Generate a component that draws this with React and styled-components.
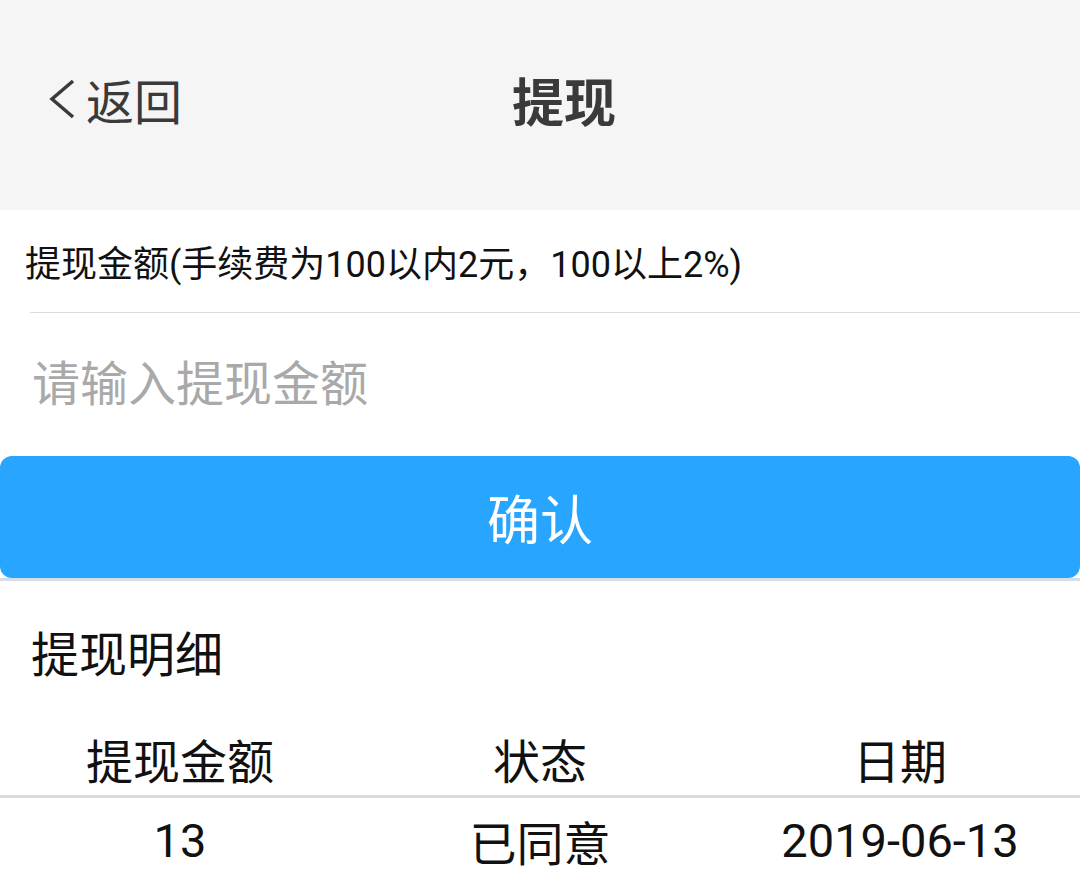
import React from 'react'
import styled, {createGlobalStyle} from 'styled-components'

const GlobalStyle = createGlobalStyle`
  html, body {
    margin: 0;
    padding: 0;
    background: #fff;
    font-family: Roboto, "Noto Sans CJK SC", sans-serif;
    color: #111;
  }
  * { box-sizing: border-box; }
`

const Page = styled.div`
  width: 1080px;
  min-height: 880px;
  background: #fff;
`

const NavBar = styled.div`
  height: 210px;
  background-color: #f5f5f5;
  display: grid;
  grid-template-columns: 1fr auto 1fr;
  align-items: center;
  padding: 0 44px 12px 48px;
`

const Back = styled.div`
  display: flex;
  align-items: center;
  gap: 10px;
  font-size: 48px;
  color: #3a3a3a;
  cursor: pointer;
`

const Title = styled.div`
  font-size: 52px;
  font-weight: bold;
  color: #3a3a3a;
  padding-left: 44px;
`

const LabelRow = styled.div`
  height: 102px;
  display: flex;
  align-items: center;
  padding: 0 0 0 25px;
  font-size: 36px;
  color: #111;
`

const Divider = styled.div`
  height: 1px;
  margin-left: 30px;
  background: #dcdcdc;
`

const AmountInput = styled.input`
  display: block;
  width: 100%;
  height: 143px;
  border: none;
  outline: none;
  padding: 0 0 0 32px;
  font-family: Roboto, "Noto Sans CJK SC", sans-serif;
  font-size: 48px;
  color: #111;
  background: transparent;

  &::placeholder {
    color: #a9a9a9;
  }
`

const Confirm = styled.button`
  display: block;
  width: 100%;
  height: 122px;
  border: none;
  border-radius: 12px;
  background: #28a5ff;
  color: #fff;
  font-family: Roboto, "Noto Sans CJK SC", sans-serif;
  font-size: 53px;
  cursor: pointer;
`

const Shadow = styled.div`
  height: 3px;
  background: #d6dde4;
`

const SectionTitle = styled.div`
  height: 140px;
  display: flex;
  align-items: center;
  padding-left: 31px;
  font-size: 48px;
  color: #111;
`

const Row = styled.div`
  display: grid;
  grid-template-columns: repeat(3, 1fr);
  align-items: center;
  height: ${props => props.h}px;
  border-bottom: ${props => props.line ? '3px solid #dadada' : 'none'};
`

const Cell = styled.div`
  text-align: center;
  font-size: 47px;
  color: #111;
  padding-top: ${props => props.pt || 0}px;
`

const Chevron = () => (
  <svg width="28" height="40" viewBox="0 0 28 40">
    <polyline points="25,2 4,20 25,38" fill="none" stroke="#3a3a3a" strokeWidth="3.5" />
  </svg>
)

const records = [
  {amount: '13', status: '已同意', date: '2019-06-13'},
]

const App = () => (
  <Page>
    <GlobalStyle/>
    <NavBar>
      <Back><Chevron/>返回</Back>
      <Title>提现</Title>
      <div/>
    </NavBar>
    <LabelRow>提现金额(手续费为100以内2元，100以上2%)</LabelRow>
    <Divider/>
    <AmountInput placeholder="请输入提现金额"/>
    <Confirm>确认</Confirm>
    <Shadow/>
    <SectionTitle>提现明细</SectionTitle>
    <Row h={77} line>
      <Cell>提现金额</Cell>
      <Cell>状态</Cell>
      <Cell>日期</Cell>
    </Row>
    {records.map(r => (
      <Row h={82} key={r.date}>
        <Cell pt={2}>{r.amount}</Cell>
        <Cell pt={2}>{r.status}</Cell>
        <Cell pt={2}>{r.date}</Cell>
      </Row>
    ))}
  </Page>
)

export default App
